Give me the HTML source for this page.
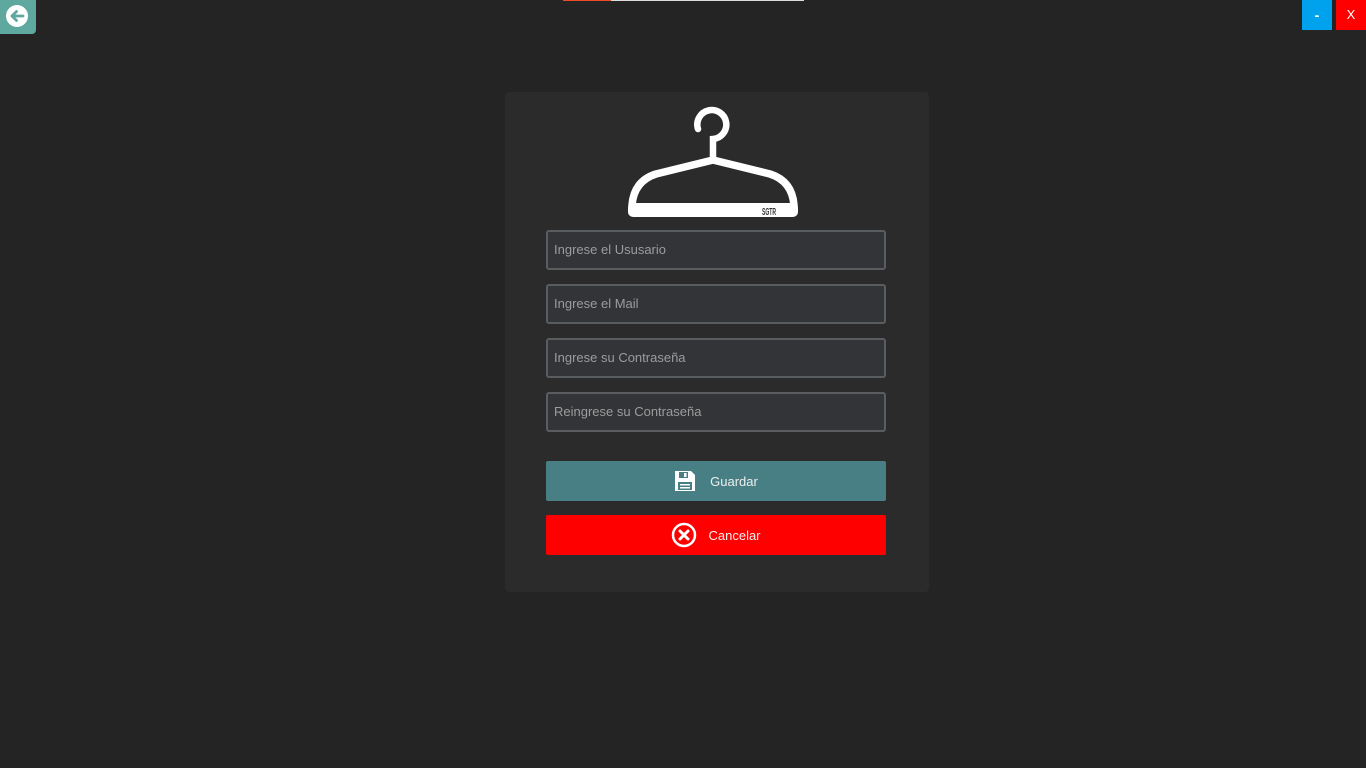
<!DOCTYPE html>
<html><head><meta charset="utf-8"><style>
*{margin:0;padding:0;box-sizing:border-box}
body{width:1366px;height:768px;background:#242424;position:relative;overflow:hidden;font-family:"Liberation Sans",sans-serif}
.back{position:absolute;left:0;top:0;width:36px;height:34px;background:#5fa89f;border-radius:0 0 4px 0}
.topbar{position:absolute;left:563px;top:0;width:241px;height:1px;background:#ddd}
.topbar i{position:absolute;left:0;top:0;width:48px;height:1px;background:#f04a2a}
.min{position:absolute;left:1302px;top:0;width:30px;height:30px;background:#00a2ed;color:#fff;text-align:center;font-size:14px;line-height:30px;font-weight:bold}
.x{position:absolute;left:1336px;top:0;width:30px;height:30px;background:#f00;color:#fff;text-align:center;font-size:13px;line-height:30px}
.card{position:absolute;left:505px;top:92px;width:424px;height:500px;background:#2b2b2b;border-radius:4px}
.in{position:absolute;left:546px;width:340px;height:40px;background:#323437;border:2px solid #5a5d60;border-radius:3px;color:#9c9c9c;font-size:13px;line-height:36px;padding-left:6px}
.btn{position:absolute;left:546px;width:340px;height:40px;border-radius:2px;color:#eee;font-size:13px;display:flex;align-items:center;justify-content:center}
</style></head><body>
<div class="back"><svg width="36" height="34" viewBox="0 0 36 34"><circle cx="17" cy="16" r="11" fill="#fff"/><path d="M23 16H12M16.5 11.5L12 16l4.5 4.5" stroke="#5fa89f" stroke-width="2.8" fill="none" stroke-linecap="round" stroke-linejoin="round"/></svg></div>
<div class="topbar"><i></i></div>
<div class="min">-</div><div class="x">X</div>
<div class="card"></div>
<svg style="position:absolute;left:0;top:0" width="1366" height="768">
<path d="M698 129 A14.5 14.5 0 1 1 713 139 V159" fill="none" stroke="#fff" stroke-width="6.5" stroke-linecap="round"/>
<path d="M713 160 L656 174 Q634 181 632 205 L632 210 L794 210 L794 205 Q792 181 770 174 Z" fill="none" stroke="#fff" stroke-width="7.5" stroke-linejoin="round"/>
<rect x="628" y="203" width="170" height="14" rx="5" fill="#fff"/>
<text x="762" y="215" textLength="14" lengthAdjust="spacingAndGlyphs" font-family="Liberation Sans Narrow,Liberation Sans,sans-serif" font-size="10" font-weight="bold" fill="#333">SGTR</text>
</svg>
<div class="in" style="top:230px">Ingrese el Ususario</div>
<div class="in" style="top:284px">Ingrese el Mail</div>
<div class="in" style="top:338px">Ingrese su Contraseña</div>
<div class="in" style="top:392px">Reingrese su Contraseña</div>
<div class="btn" style="top:461px;background:#477f85"><svg width="22" height="22" viewBox="0 0 22 22" style="margin-right:14px"><path d="M1 1h16l4 4v16H1z" fill="#fff"/><rect x="5" y="2" width="9" height="6" fill="#477f85"/><rect x="10" y="3" width="2.5" height="4" fill="#fff"/><rect x="4" y="12" width="14" height="8" fill="#477f85"/><rect x="6" y="14" width="10" height="1.5" fill="#fff"/><rect x="6" y="17" width="10" height="1.5" fill="#fff"/></svg>Guardar</div>
<div class="btn" style="top:515px;background:#f00"><svg width="26" height="26" viewBox="0 0 26 26" style="margin-right:11px"><circle cx="13" cy="13" r="11" fill="none" stroke="#fff" stroke-width="2.5"/><path d="M9 9l8 8M17 9l-8 8" stroke="#fff" stroke-width="3" stroke-linecap="round"/></svg>Cancelar</div>
</body></html>
